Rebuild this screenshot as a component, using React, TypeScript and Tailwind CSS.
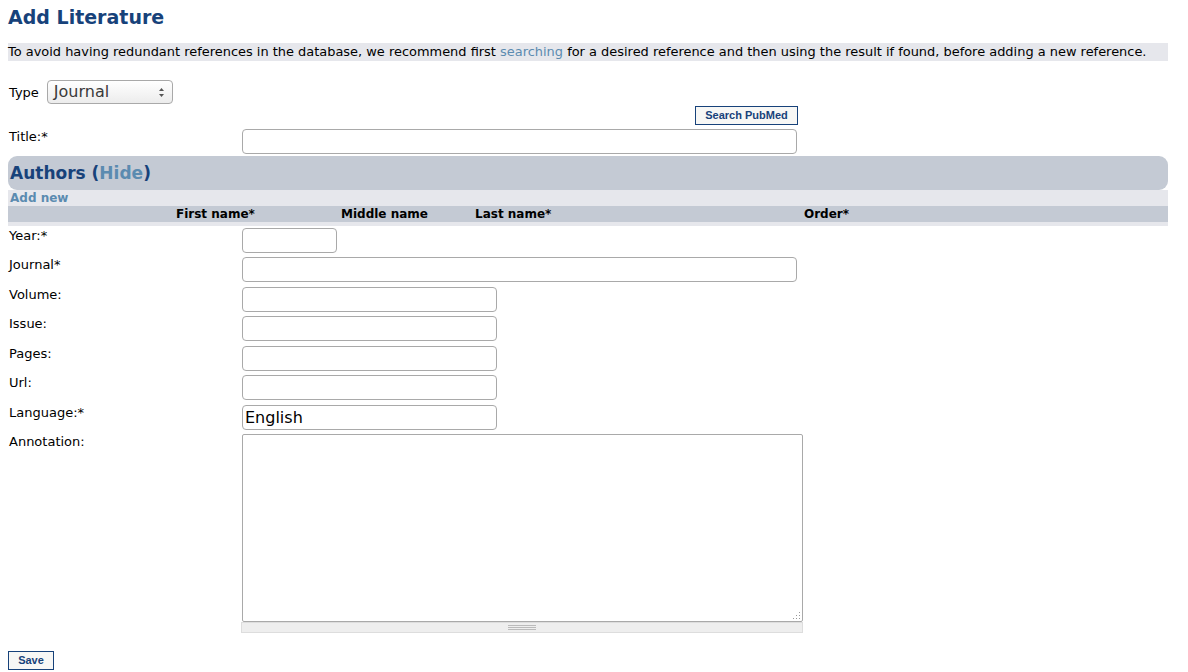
const labelCls = "text-[13px] text-black leading-[16px]";
const inputCls =
  "h-[25px] border border-[#a9a9a9] rounded-[4px] bg-white px-[2px] text-[16px] outline-none";

const Field = ({ label, width, value, top = "" }: { label: string; width: string; value?: string; top?: string }) => (
  <div className={`grid grid-cols-[233px_1fr] pl-[1px] ${top}`}>
    <div className={labelCls}>{label}</div>
    <div>
      <input className={`${inputCls} ${width}`} defaultValue={value} />
    </div>
  </div>
);

const App = () => {
  return (
    <div className="w-[1188px] h-[672px] bg-white font-['DejaVu_Sans',sans-serif] text-black overflow-hidden">
      <div className="pl-[8px] pr-[20px] pt-[5px]">
        <h1 className="text-[19px] font-bold text-[#17427a] leading-[24px]">Add Literature</h1>

        <p className="mt-[14px] bg-[#e6e7ec] text-[12.94px] leading-[18px] h-[18px] w-[1160px]">
          To avoid having redundant references in the database, we recommend first{" "}
          <a className="text-[#5b8bb0]">searching</a> for a desired reference and then using the result if found,
          before adding a new reference.
        </p>

        <div className="mt-[19px] flex items-center gap-[8px] pl-[1px]">
          <span className="text-[13px] pt-[2px]">Type</span>
          <div className="w-[126px] h-[24px] border border-[#a9a9a9] rounded-[4px] bg-gradient-to-b from-white to-[#ececec] flex items-center justify-between pl-[6px] pr-[7px]">
            <span className="text-[16px] text-[#3a3a3a]">Journal</span>
            <svg width="7" height="11" viewBox="0 0 7 11">
              <path d="M3.5 1 L6 4 H1 Z" fill="#555" />
              <path d="M3.5 10 L6 7 H1 Z" fill="#555" />
            </svg>
          </div>
        </div>

        <div className="w-[790px] flex justify-end mt-[2px]">
          <button className="w-[103px] h-[19px] border-[1.5px] border-[#17427a] bg-[#f7f7f5] text-[11px] font-bold text-[#17427a] font-['Liberation_Sans',sans-serif] leading-none">
            Search PubMed
          </button>
        </div>

        <Field label="Title:*" width="w-[555px]" top="mt-[4px]" />

        <div className="mt-[2px] w-[1160px] h-[34px] bg-[#c4cad4] rounded-[9px] flex items-center pl-[2px]">
          <span className="text-[17px] font-bold text-[#17427a] pt-[1px]">
            Authors (<a className="text-[#5b8bb0]">Hide</a>)
          </span>
        </div>
        <div className="w-[1160px] bg-[#e6e7ec] h-[16px] text-[12px] font-bold text-[#5b8bb0] pl-[2px] leading-[16px]">
          Add new
        </div>
        <div className="w-[1160px] bg-[#c4cad4] h-[16px] text-[12px] font-bold leading-[16px] grid grid-cols-[168px_165px_134px_329px_1fr]">
          <span />
          <span>First name*</span>
          <span>Middle name</span>
          <span>Last name*</span>
          <span>Order*</span>
        </div>
        <div className="w-[1160px] bg-[#e6e7ec] h-[4px]" />

        <div className="flex flex-col gap-[4.43px] mt-[2px]">
          <Field label="Year:*" width="w-[95px]" />
          <Field label="Journal*" width="w-[555px]" />
          <Field label="Volume:" width="w-[255px]" />
          <Field label="Issue:" width="w-[255px]" />
          <Field label="Pages:" width="w-[255px]" />
          <Field label="Url:" width="w-[255px]" />
          <Field label="Language:*" width="w-[255px]" value="English" />
          <div className="grid grid-cols-[233px_1fr] pl-[1px]">
            <div className={labelCls}>Annotation:</div>
            <div>
              <div className="relative w-[561px]">
                <textarea className="block w-[561px] h-[188px] border border-[#a9a9a9] rounded-[2px] bg-white outline-none resize-none" />
                <svg className="absolute right-[2px] bottom-[2px]" width="8" height="8" viewBox="0 0 8 8">
                  <rect x="6" y="0" width="1" height="1" fill="#999" />
                  <rect x="6" y="3" width="1" height="1" fill="#999" />
                  <rect x="3" y="3" width="1" height="1" fill="#999" />
                  <rect x="6" y="6" width="1" height="1" fill="#999" />
                  <rect x="3" y="6" width="1" height="1" fill="#999" />
                  <rect x="0" y="6" width="1" height="1" fill="#999" />
                </svg>
              </div>
              <div className="w-[562px] -ml-[1px] h-[11px] bg-[#eeeeee] border border-[#dddddd] flex items-center justify-center">
                <div className="w-[28px] flex flex-col gap-[1px]">
                  <div className="h-[1px] bg-[#bbb]" />
                  <div className="h-[1px] bg-[#bbb]" />
                  <div className="h-[1px] bg-[#bbb]" />
                </div>
              </div>
            </div>
          </div>
        </div>

        <button className="mt-[18px] w-[46px] h-[19px] border-[1.5px] border-[#17427a] bg-[#f7f7f5] text-[11px] font-bold text-[#17427a] font-['Liberation_Sans',sans-serif] leading-none">
          Save
        </button>
      </div>
    </div>
  );
};

export default App;
